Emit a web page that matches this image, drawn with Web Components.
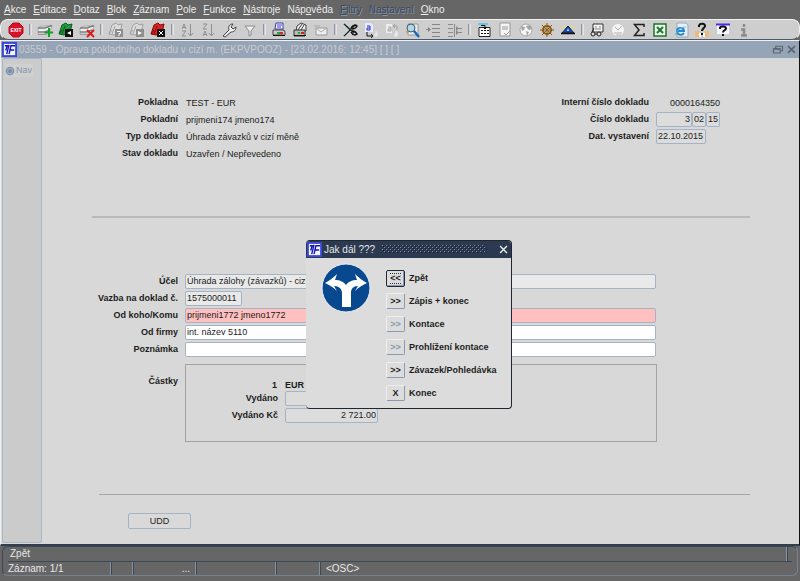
<!DOCTYPE html>
<html lang="cs">
<head>
<meta charset="utf-8">
<title>Oprava pokladního dokladu</title>
<style>
  html {
    height: 100%;
  }

  body {
    min-height: 100%;
    margin: 0;
    display: flex;
    flex-direction: column;
    background: #666;
    color: #1c1c1c;
    font: 9px/15px "Liberation Sans", Arial, sans-serif;
  }

  form-window {
    flex: 1;
  }
</style>
</head>
<body>
<menu-bar></menu-bar>
<tool-bar></tool-bar>
<form-window heading="03559 - Oprava pokladního dokladu v cizí m. (EKPVPOOZ) - [23.02.2016; 12:45] [ ] [ ]">
  <cash-document></cash-document>
</form-window>
<status-bar></status-bar>
<choice-dialog heading="Jak dál ???"></choice-dialog>

<script>
const svg = (body, size = 16) =>
  `<svg width="${size}" height="${size}" viewBox="0 0 16 16" fill="none" aria-hidden="true">${body}</svg>`;

const logo = svg(`
  <rect x="1" y="1" width="14" height="14" fill="#f4f6ff" stroke="#3a46d8" stroke-width="2"/>
  <path d="M3 4h4M5.500 4L4 9M7.500 3L5 13M14 4H9.500L7.500 13M9 8.500h4" stroke="#1414b8" stroke-width="1.500"/>`, 15);

const sheet = `
  <path d="M1 6l4-2h10l-3 8H1z" fill="#eee" stroke="#a8a8a8"/>
  <path d="M1 6h7l7-2.500M1 10h7l5-2" stroke="#7c7c7c" stroke-width="1.500"/>
  <path d="M1 12.500h8" stroke="#999"/>`;

const folder = (fill, edge, badge, mark) => `
  <path d="M1 12L4 3l4-2 2 2 4-1-2 9-6 2z" fill="${fill}" stroke="${edge}"/>
  <path d="M4 12L7 4M1 12l3-4" stroke="${edge}"/>
  <rect x="7" y="7" width="8" height="8" fill="${badge}"/>${mark}`;

const icons = {
  exit: `<path d="M5 1h6l4 4v6l-4 4H5l-4-4V5z" fill="#d8102a" stroke="#b50c20"/>
    <text x="8" y="10" fill="#fff" text-anchor="middle" font-size="5" font-weight="bold">EXIT</text>`,
  insert: sheet + `<path d="M12 6v9M7.500 10.500h9" stroke="#14a028" stroke-width="2"/>`,
  save: folder("#1f9a3c", "#0b5a20", "#111", `<path d="M13 9v4l-4-2z" fill="#fff"/>`),
  remove: sheet + `<path d="M8 8l7 7M15 8l-7 7" stroke="#e01818" stroke-width="2"/>`,
  query: folder("#dcdcdc", "#a2a2a2", "#8e8e8e", `<path d="M9 9.500h3.500v2H11V14" stroke="#fff"/>`),
  run: folder("#dcdcdc", "#a2a2a2", "#8e8e8e", `<path d="M9 9v4l4-2z" fill="#fff"/>`),
  cancel: folder("#e02020", "#7c0c0c", "#111", `<path d="M9 9l4 4M13 9l-4 4" stroke="#fff"/>`),
  sortUp: `<path d="M3 7l2-5 2 5M3.500 5.500h3M3 9h4l-4 5h4M11.500 2v11M9 11l2.500 3 2.500-3" stroke="#909090"/>`,
  sortDown: `<path d="M3 2h4L3 7h4M3 14l2-5 2 5M3.500 12.500h3M11.500 2v11M9 11l2.500 3 2.500-3" stroke="#909090"/>`,
  wrench: `<path d="M2 14l6-6c-1-3 0-6 4-6l-2 3 2 2 3-2c0 4-3 5-5 5l-6 5z" fill="#eee" stroke="#444"/>`,
  funnel: `<path d="M3 4h10l-4 5v4l-2 1V9z" fill="#eee" stroke="#8a8a8a"/>`,
  print: `<path d="M5 1h7v6H4z" fill="#fff" stroke="#3338b0"/><path d="M6 3h5M6 5h4" stroke="#3338d0"/>
    <path d="M2 8h11l1 2v3H2z" fill="#ccc" stroke="#444"/><path d="M2 13.500h12" stroke="#111"/>
    <path d="M6 11h3" stroke="#10b030" stroke-width="2"/><path d="M9 11h3" stroke="#e8202c" stroke-width="2"/>`,
  preview: `<path d="M5 4l4-3 5 2v6H4z" fill="#eee" stroke="#444"/><path d="M6 8l4-6M9 8l3-5" stroke="#444"/>
    <path d="M2 8h11v6H2z" fill="#bbb" stroke="#333"/><path d="M2 13.500h12" stroke="#111"/>
    <path d="M6 11h2" stroke="#10b030" stroke-width="2"/><path d="M9 11h3" stroke="#d02020" stroke-width="2"/>`,
  mail: `<path d="M3 6h11v7H3z" fill="#eee" stroke="#999"/><path d="M3 6l5 4 6-4" stroke="#aaa"/><path d="M1 4h6" stroke="#aaa"/>`,
  cut: `<path d="M2 2l10 9M2 14L13 3" stroke="#222" stroke-width="1.500"/><path d="M1 2l6 6-6 6" stroke="#78b5bb"/>
    <path d="M9 6c2-4 5-3 6-2-1 2-3 3-5 3M9 10c2 4 5 3 6 2-1-2-3-3-5-3" stroke="#111" stroke-width="1.500"/>`,
  copy: `<path d="M2 1h6l2 2v7H2z" fill="#e8ebff"/><path d="M4 4h3v4H4V6h3" stroke="#2a2ad8"/>
    <path d="M4 10v4h6M8 12l2 2-2 2" stroke="#111"/><path d="M12 10h2v4h-2v-2h2" stroke="#eee"/>`,
  paste: `<path d="M2 2h6v9H2z" fill="#eee"/><path d="M4 5h3v4H4V7h3M9 4h4v4M9 4l2-2M9 4l2 2" stroke="#a0a0a0"/>
    <path d="M11 10h2v4h-2v-2h2" stroke="#f4f4f4"/>`,
  find: `<path d="M3 2h10v11H3z" fill="#eee" stroke="#999"/><circle cx="6" cy="6" r="4" fill="#a8daf2" stroke="#555"/>
    <path d="M9 9l5 6" stroke="#1668b8" stroke-width="2.500"/><path d="M1 10h3" stroke="#b98b38"/>`,
  indent: `<path d="M0 7.500h4M6 2.500h8M6 6.500h8M6 10.500h8M6 14.500h8" stroke="#858585"/><path d="M2 5l3 2.500L2 10z" fill="#858585"/>`,
  columns: `<path d="M1 2.500h5M1 6.500h5M1 10.500h5M1 14.500h5M7.500 2v13M10 6.500h5M10 10.500h5" stroke="#8a8a8a"/>
    <path d="M9 4l3 2.500L9 9zM9 8l3 2.500L9 13z" fill="#8a8a8a"/>`,
  calendar: `<path d="M3 5.500h11v9H3z" fill="#fff" stroke="#222"/><path d="M2 2h10" stroke="#6ac2ee" stroke-width="2"/>
    <path d="M5 8.500h2M8 8.500h2M11 8.500h2M5 11.500h2M8 11.500h2M11 11.500h2" stroke="#111"/>
    <path d="M5 3.500h4v3M7 5l2 2 2-2" stroke="#111"/>`,
  page: `<path d="M3 1h10v13H3z" fill="#f5f5f5" stroke="#999"/><path d="M5 5h6M5 7h6M7 11l2 2 4-4" stroke="#999"/>`,
  globe: `<circle cx="8" cy="8" r="6" fill="#f7f7f7" stroke="#a4a4a4"/>
    <path d="M3 4l4 1-1 3-2 1zM8 4l4-1 2 4-3 1-2-2zM8 9l3 1-2 4z" fill="#a4a4a4"/>`,
  wheel: `<circle cx="8" cy="8" r="4" stroke="#8b5a12" stroke-width="2"/>
    <path d="M8 1v14M1 8h14M3 3l10 10M13 3L3 13" stroke="#8b5a12"/>`,
  eye: `<path d="M8 4l6 7H2z" fill="#2846d8" stroke="#222"/><path d="M1 8l5-5M15 8l-5-5" stroke="#e8df58"/>
    <circle cx="8" cy="8" r="2" fill="#58c6f0" stroke="#102080"/><path d="M1 11.500h14" stroke="#111" stroke-width="1.500"/>`,
  glasses: `<path d="M4 2h10v8H4z" fill="#f4f4f4" stroke="#333"/><path d="M6 5h2M10 5h2M6 7h6" stroke="#888"/>
    <circle cx="4" cy="12" r="2" fill="#ddd" stroke="#222"/><circle cx="10" cy="12" r="2" fill="#ddd" stroke="#222"/>
    <path d="M6 12h2M3 10l2-4" stroke="#222"/>`,
  clock: `<circle cx="8" cy="8" r="6" fill="#f4f4f4"/><path d="M5 5l3 3 4-4M4 11h8M6 13h5" stroke="#b0b0b0"/>`,
  sum: `<path d="M13 5V2.500H3.500L8 8l-4.500 5.500H13V11" stroke="#222" stroke-width="1.500"/>`,
  excel: `<path d="M2 2h12v12H2z" fill="#e9f4e9" stroke="#20752e" stroke-width="1.500"/>
    <path d="M5 5l6 6M11 5l-6 6" stroke="#20752e" stroke-width="2"/>`,
  web: `<path d="M4 1h9l2 2v12H4z" fill="#e7eef6" stroke="#98a8bc"/>
    <path d="M11 11c-2 3-7 2-7-2s7-4 7 0H4" stroke="#2688cc" stroke-width="2"/><path d="M2 13c2-5 6-8 11-8" stroke="#6cbde8"/>`,
  helpHands: `<path d="M1 9h4v6H1zM11 9h4v6h-4z" fill="#f1b878"/><path d="M5 11h2v4H5zM9 11h2v4H9z" fill="#fff"/>
    <path d="M5 5V3.500C6 1 11 1 11 4c0 2-3 2-3 5M8 11v2" stroke="#111" stroke-width="2"/>`,
  help: `<path d="M2 3h12v9H2z" fill="#f7f7ff"/><path d="M1 2.500h14" stroke="#5028e8" stroke-width="2"/>
    <path d="M5 7V5.500C6 4 11 4 11 6.500c0 2-3 1.500-3 4M8 12v2" stroke="#111" stroke-width="2"/>`,
  info: `<path d="M8 2v3M5 7.500h3V13M5 13.500h6" stroke="#8c8c8c" stroke-width="2.500"/>`
};

class MenuBar extends HTMLElement {
  constructor() {
    super();
    this.attachShadow({ mode: "open" });
  }

  connectedCallback() {
    // "_" stands before the access key, "-" marks a disabled menu
    const items = ["_Akce", "_Editace", "_Dotaz", "_Blok", "_Záznam", "_Pole", "_Funkce", "_Nástroje",
      "Náp_ověda", "-_Filtry", "-Na_stavení", "_Okno"];
    this.shadowRoot.innerHTML = `
      <style>
        :host {
          display: block;
          background: #666;
        }

        nav {
          display: flex;
          gap: 7px;
          height: 19px;
          padding: 0 4px;
        }

        button {
          padding: 0;
          border: 0;
          background: none;
          color: #ededed;
          font: 10px/20px "Liberation Sans", Arial, sans-serif;
        }

        button:disabled {
          color: #39495e;
          text-shadow: 1px 1px #8794a4;
        }
      </style>
      <nav>${items.map((item) => `<button ${item[0] === "-" ? "disabled" : ""}>${
        item.replace("-", "").replace(/_(.)/, "<u>$1</u>")}</button>`).join("")}</nav>
    `;
  }
}

class ToolBar extends HTMLElement {
  constructor() {
    super();
    this.attachShadow({ mode: "open" });
  }

  connectedCallback() {
    const groups = [
      ["exit"],
      ["insert", "save", "remove"],
      ["query", "run", "cancel"],
      ["sortUp", "sortDown", "wrench", "funnel"],
      ["print", "preview", "mail"],
      ["cut", "copy", "paste", "find", "indent", "columns"],
      ["calendar", "page", "globe", "wheel", "eye"],
      ["glasses", "clock", "sum", "excel", "web", "helpHands", "help", "info"]
    ];
    const button = (name) => `<button aria-label="${name}">${svg(icons[name])}</button>`;
    this.shadowRoot.innerHTML = `
      <style>
        :host {
          display: flex;
          align-items: center;
          gap: 5px;
          box-sizing: border-box;
          height: 21px;
          padding: 0 7px;
          border: 1px solid #f2f2f2;
          border-bottom-color: #4f5a66;
          border-radius: 8px;
          background: #cecece;
        }

        button {
          display: flex;
          width: 16px;
          padding: 0;
          border: 0;
          background: none;
        }

        i {
          box-sizing: border-box;
          width: 3px;
          height: 11px;
          border-left: 1px solid #8796aa;
          border-right: 1px solid #e4e4e4;
        }
      </style>
      ${groups.map((group) => group.map(button).join("")).join("<i></i>")}
    `;
  }
}

class FormWindow extends HTMLElement {
  constructor() {
    super();
    this.attachShadow({ mode: "open" });
  }

  connectedCallback() {
    this.shadowRoot.innerHTML = `
      <style>
        :host {
          display: flex;
          flex-direction: column;
          border: 1px solid #f0f0f0;
          border-right-color: #111;
          border-bottom: 2px solid #333e4b;
          background: #d8d8d8;
        }

        header {
          display: flex;
          align-items: center;
          gap: 2px;
          height: 17px;
          padding: 0 2px 0 1px;
          background: #96a4b7;
          color: #cbcbcb;
          font-size: 10px;
        }

        h1 {
          flex: 1;
          margin: 0;
          font: inherit;
        }

        header button {
          display: flex;
          padding: 0;
          border: 0;
          background: none;
        }

        .body {
          flex: 1;
          display: flex;
        }

        aside {
          box-sizing: border-box;
          width: 40px;
          padding: 5px 2px;
          border: 1px solid #abb8c8;
          border-radius: 2px;
          background: #cbcbcb;
          margin: 0 0 1px 1px;
        }

        aside button {
          display: flex;
          align-items: center;
          gap: 1px;
          padding: 0 1px 0 0;
          border: 0;
          background: #d0d0d0;
          color: #8795a8;
          font: 9px/13px "Liberation Sans", Arial, sans-serif;
        }

        main {
          flex: 1;
        }
      </style>
      <header>
        ${logo}
        <h1>${this.getAttribute("heading")}</h1>
        <button aria-label="Obnovit">${svg(`<path d="M5 6V3h9v6h-3M2 6h9v6H2zM2 7h9" stroke="#5e6670" stroke-width="1.500"/>`, 12)}</button>
        <button aria-label="Zavřít">${svg(`<path d="M3 3l10 10M13 3L3 13" stroke="#5e6670" stroke-width="2.500"/>`, 11)}</button>
      </header>
      <div class="body">
        <aside><button>${svg(`<circle cx="8" cy="8" r="6" fill="#9baabd" stroke="#8493a8" stroke-width="2"/><circle cx="8" cy="8" r="3" fill="#7789a2"/>`, 10)}Nav</button></aside>
        <main><slot></slot></main>
      </div>
    `;
  }
}

// One labelled row. Attributes: label, value ("|" splits it into boxes), widths, kind
class DocField extends HTMLElement {
  constructor() {
    super();
    this.attachShadow({ mode: "open" });
  }

  connectedCallback() {
    const label = this.getAttribute("label");
    const values = (this.getAttribute("value") || "").split("|");
    const widths = (this.getAttribute("widths") || "").split(" ");
    const plain = this.getAttribute("kind") === "plain";
    const boxes = values.map((value, i) => plain
      ? `<output id="f${i}">${value}</output>`
      : `<input id="f${i}" value="${value}" ${i ? `aria-label="${label} ${i + 1}"` : ""}
          style="${widths[i] ? `width: ${widths[i]}px` : "flex: 1"}">`);
    this.shadowRoot.innerHTML = `
      <style>
        :host {
          display: flex;
          gap: 7px;
          height: 15px;
        }

        label {
          width: var(--label-width, 86px);
          font-weight: bold;
          text-align: right;
          white-space: nowrap;
        }

        div {
          flex: 1;
          display: flex;
        }

        input {
          box-sizing: border-box;
          min-width: 0;
          padding: 0 1px;
          border: 1px solid #a5b3c5;
          border-radius: 2px;
          background: var(--field-fill, #dcdcdc);
          color: inherit;
          font: inherit;
          line-height: 13px;
          text-align: var(--field-align, left);
        }

        output {
          flex: 1;
          padding: 1px 0 0 1px;
          text-align: var(--field-align, left);
          white-space: nowrap;
        }
      </style>
      <label for="f0">${label}</label>
      <div>${boxes.join("")}</div>
    `;
  }
}

class CashDocument extends HTMLElement {
  constructor() {
    super();
    this.attachShadow({ mode: "open" });
  }

  connectedCallback() {
    this.shadowRoot.innerHTML = `
      <style>
        :host {
          display: block;
          padding: 37px 49px 0 50px;
        }

        .head {
          display: flex;
          justify-content: space-between;
          padding-right: 30px;
        }

        .rows {
          display: flex;
          flex-direction: column;
          gap: 2px;
        }

        .ids {
          --label-width: 92px;
        }

        .right {
          --field-align: right;
        }

        hr {
          height: 2px;
          margin: 55px 0 56px;
          border: 0;
          background: #bababa;
        }

        .form {
          padding-right: 94px;
        }

        .grey {
          --field-fill: #e9e9e9;
        }

        .white {
          --field-fill: #fff;
        }

        .pink {
          --field-fill: #ffc0c0;
        }

        .amounts {
          display: flex;
          gap: 7px;
          margin: 7px 93px 0 0;
        }

        .amounts h2 {
          width: 86px;
          margin: 10px 0 0;
          font: bold 9px/15px "Liberation Sans", Arial, sans-serif;
          text-align: right;
        }

        .box {
          flex: 1;
          height: 62px;
          padding: 14px 0 0 6px;
          border: 1px solid #a3a3a3;
          --field-align: right;
        }

        .currency {
          display: flex;
          gap: 8px;
          height: 10px;
          font-weight: bold;
          line-height: 12px;
        }

        .currency b:first-child {
          width: 85px;
          text-align: right;
        }

        hr.thin {
          height: 1px;
          margin: 52px 0 18px 7px;
          background: #a5a5a5;
        }

        .udd {
          width: 63px;
          height: 16px;
          margin-left: 36px;
          padding: 0;
          border: 1px solid #a5b3c5;
          border-radius: 2px;
          background: #d9d9d9;
          color: inherit;
          font: inherit;
        }
      </style>
      <div class="head">
        <div class="rows">
          <doc-field kind="plain" label="Pokladna" value="TEST - EUR"></doc-field>
          <doc-field kind="plain" label="Pokladní" value="prijmeni174 jmeno174"></doc-field>
          <doc-field kind="plain" label="Typ dokladu" value="Úhrada závazků v cizí měně"></doc-field>
          <doc-field kind="plain" label="Stav dokladu" value="Uzavřen / Nepřevedeno"></doc-field>
        </div>
        <div class="rows ids">
          <doc-field class="right" kind="plain" label="Interní číslo dokladu" value="0000164350"></doc-field>
          <doc-field class="right" label="Číslo dokladu" value="3|02|15" widths="36 14 14"></doc-field>
          <doc-field label="Dat. vystavení" value="22.10.2015" widths="50"></doc-field>
        </div>
      </div>
      <hr>
      <div class="rows form">
        <doc-field class="grey" label="Účel" value="Úhrada zálohy (závazků) - cizí"></doc-field>
        <doc-field class="grey" label="Vazba na doklad č." value="1575000011" widths="57"></doc-field>
        <doc-field class="pink" label="Od koho/Komu" value="prijmeni1772 jmeno1772"></doc-field>
        <doc-field class="white" label="Od firmy" value="int. název 5110"></doc-field>
        <doc-field class="white" label="Poznámka"></doc-field>
      </div>
      <div class="amounts">
        <h2>Částky</h2>
        <div class="box rows">
          <div class="currency"><b>1</b><b>EUR</b></div>
          <doc-field label="Vydáno" widths="93"></doc-field>
          <doc-field label="Vydáno Kč" value="2 721.00" widths="93"></doc-field>
        </div>
      </div>
      <hr class="thin">
      <button class="udd">UDD</button>
    `;
  }
}

class StatusBar extends HTMLElement {
  constructor() {
    super();
    this.attachShadow({ mode: "open" });
  }

  connectedCallback() {
    this.shadowRoot.innerHTML = `
      <style>
        :host {
          display: block;
          padding: 0 2px 5px;
          background: #666;
          color: #e8e8e8;
          font: 10px/14px "Liberation Sans", Arial, sans-serif;
        }

        .frame {
          border: 1px solid #77828f;
          border-top-color: #3c4856;
          border-left-color: #3c4856;
          border-radius: 6px;
          padding: 0 5px;
        }

        .message {
          padding-left: 2px;
          border-bottom: 1px solid #3c4856;
          display: flex;
          justify-content: space-between;
        }

        .message::after {
          content: "";
          width: 1px;
          margin-right: 4px;
          border-left: 1px solid #8794a4;
          background: #3c4856;
        }

        .cells {
          display: flex;
        }

        .cells span {
          box-sizing: border-box;
          height: 13px;
          padding-right: 5px;
          border-right: 1px solid #8190a2;
          box-shadow: 1px 0 #3c4856;
        }

        .cells span:last-child {
          border: 0;
          box-shadow: none;
          padding-left: 6px;
        }
      </style>
      <div class="frame">
        <div class="message">Zpět</div>
        <div class="cells">
          <span style="width: 103px">Záznam: 1/1</span>
          <span style="width: 22px"></span>
          <span style="width: 63px; text-align: right">...</span>
          <span style="width: 80px"></span>
          <span style="width: 44px"></span>
          <span>&lt;OSC&gt;</span>
        </div>
      </div>
    `;
  }
}

class ChoiceDialog extends HTMLElement {
  constructor() {
    super();
    this.attachShadow({ mode: "open" });
  }

  connectedCallback() {
    const choices = [
      ["&lt;&lt;", "Zpět", "class='current'"],
      ["&gt;&gt;", "Zápis + konec", ""],
      ["&gt;&gt;", "Kontace", "disabled"],
      ["&gt;&gt;", "Prohlížení kontace", "disabled"],
      ["&gt;&gt;", "Závazek/Pohledávka", ""],
      ["X", "Konec", ""]
    ];
    this.shadowRoot.innerHTML = `
      <style>
        :host {
          position: absolute;
          left: 306px;
          top: 240px;
          box-sizing: border-box;
          width: 206px;
          border: 1px solid #20262e;
          border-left: 0;
          border-radius: 4px;
          background: #dcdcdc;
          overflow: hidden;
        }

        header {
          display: flex;
          align-items: center;
          gap: 2px;
          height: 17px;
          padding: 0 2px 0 1px;
          background: #2b3a50;
          color: #e6e6e6;
          font-size: 10px;
        }

        h2 {
          margin: 0;
          font: inherit;
        }

        .grip {
          flex: 1;
          height: 9px;
          margin: 0 10px 0 5px;
        }

        header button {
          display: flex;
          padding: 0;
          border: 0;
          background: none;
        }

        .body {
          display: flex;
          gap: 15px;
          padding: 5px 0 6px 15px;
        }

        ul {
          display: flex;
          flex-direction: column;
          gap: 5px;
          margin: 6px 0 0;
          padding: 0;
          list-style: none;
        }

        li {
          display: flex;
          align-items: center;
          gap: 4px;
          height: 18px;
          font-weight: bold;
        }

        li button {
          box-sizing: border-box;
          width: 19px;
          height: 16px;
          padding: 0;
          border: 1px solid #8a9ab0;
          border-top-color: #eee;
          border-left-color: #eee;
          border-radius: 2px;
          background: #dcdcdc;
          color: #1c1c1c;
          font: bold 9px/13px "Liberation Sans", Arial, sans-serif;
        }

        li button:disabled {
          color: #8798ae;
        }

        li .current {
          height: 17px;
          border: 1px solid #222b38;
          background:
            repeating-linear-gradient(90deg, #333 0 1px, transparent 1px 2px) 3px 2px / 12px 1px no-repeat,
            repeating-linear-gradient(90deg, #333 0 1px, transparent 1px 2px) 3px 12px / 12px 1px no-repeat,
            #dcdcdc;
          box-shadow: inset -1px -1px #8a9ab0;
        }
      </style>
      <header>
        ${logo}
        <h2>${this.getAttribute("heading")}</h2>
        <svg class="grip" aria-hidden="true">
          <pattern id="dots" width="8" height="8" patternUnits="userSpaceOnUse">
            <path d="M0 0h1v1H0zM2 2h1v1H2zM4 4h1v1H4zM6 6h1v1H6zM4 0h1v1H4zM6 2h1v1H6zM0 4h1v1H0zM2 6h1v1H2z" fill="#8593a6"/>
            <path d="M1 1h1v1H1zM3 3h1v1H3zM5 5h1v1H5zM7 7h1v1H7zM5 1h1v1H5zM7 3h1v1H7zM1 5h1v1H1zM3 7h1v1H3z" fill="#131a24"/>
          </pattern>
          <rect width="100%" height="8" fill="url(#dots)"/>
        </svg>
        <button aria-label="Zavřít">${svg(`<path d="M3 3l10 10M13 3L3 13" stroke="#eee" stroke-width="2"/>`, 11)}</button>
      </header>
      <div class="body">
        <svg width="50" height="50" viewBox="0 0 50 50" aria-hidden="true">
          <circle cx="25" cy="25" r="24" fill="#07488f" stroke="#eee"/>
          <path d="M21 44V30c0-4-3-7-8-7l3 5C12 24 8 22 4 20c4-2 8-5 12-9l-2 6c5 0 9 2 11 5 2-3 6-5 11-5l-2-6c4 4 8 7 12 9-4 2-8 4-12 8l3-5c-5 0-7 3-7 7v14z" fill="#fff"/>
        </svg>
        <ul>${choices.map(([sign, text, state], i) => `
          <li><button id="c${i}" ${state}>${sign}</button><label for="c${i}">${text}</label></li>`).join("")}
        </ul>
      </div>
    `;
  }
}

customElements.define("menu-bar", MenuBar);
customElements.define("tool-bar", ToolBar);
customElements.define("form-window", FormWindow);
customElements.define("doc-field", DocField);
customElements.define("cash-document", CashDocument);
customElements.define("status-bar", StatusBar);
customElements.define("choice-dialog", ChoiceDialog);
</script>
</body>
</html>
